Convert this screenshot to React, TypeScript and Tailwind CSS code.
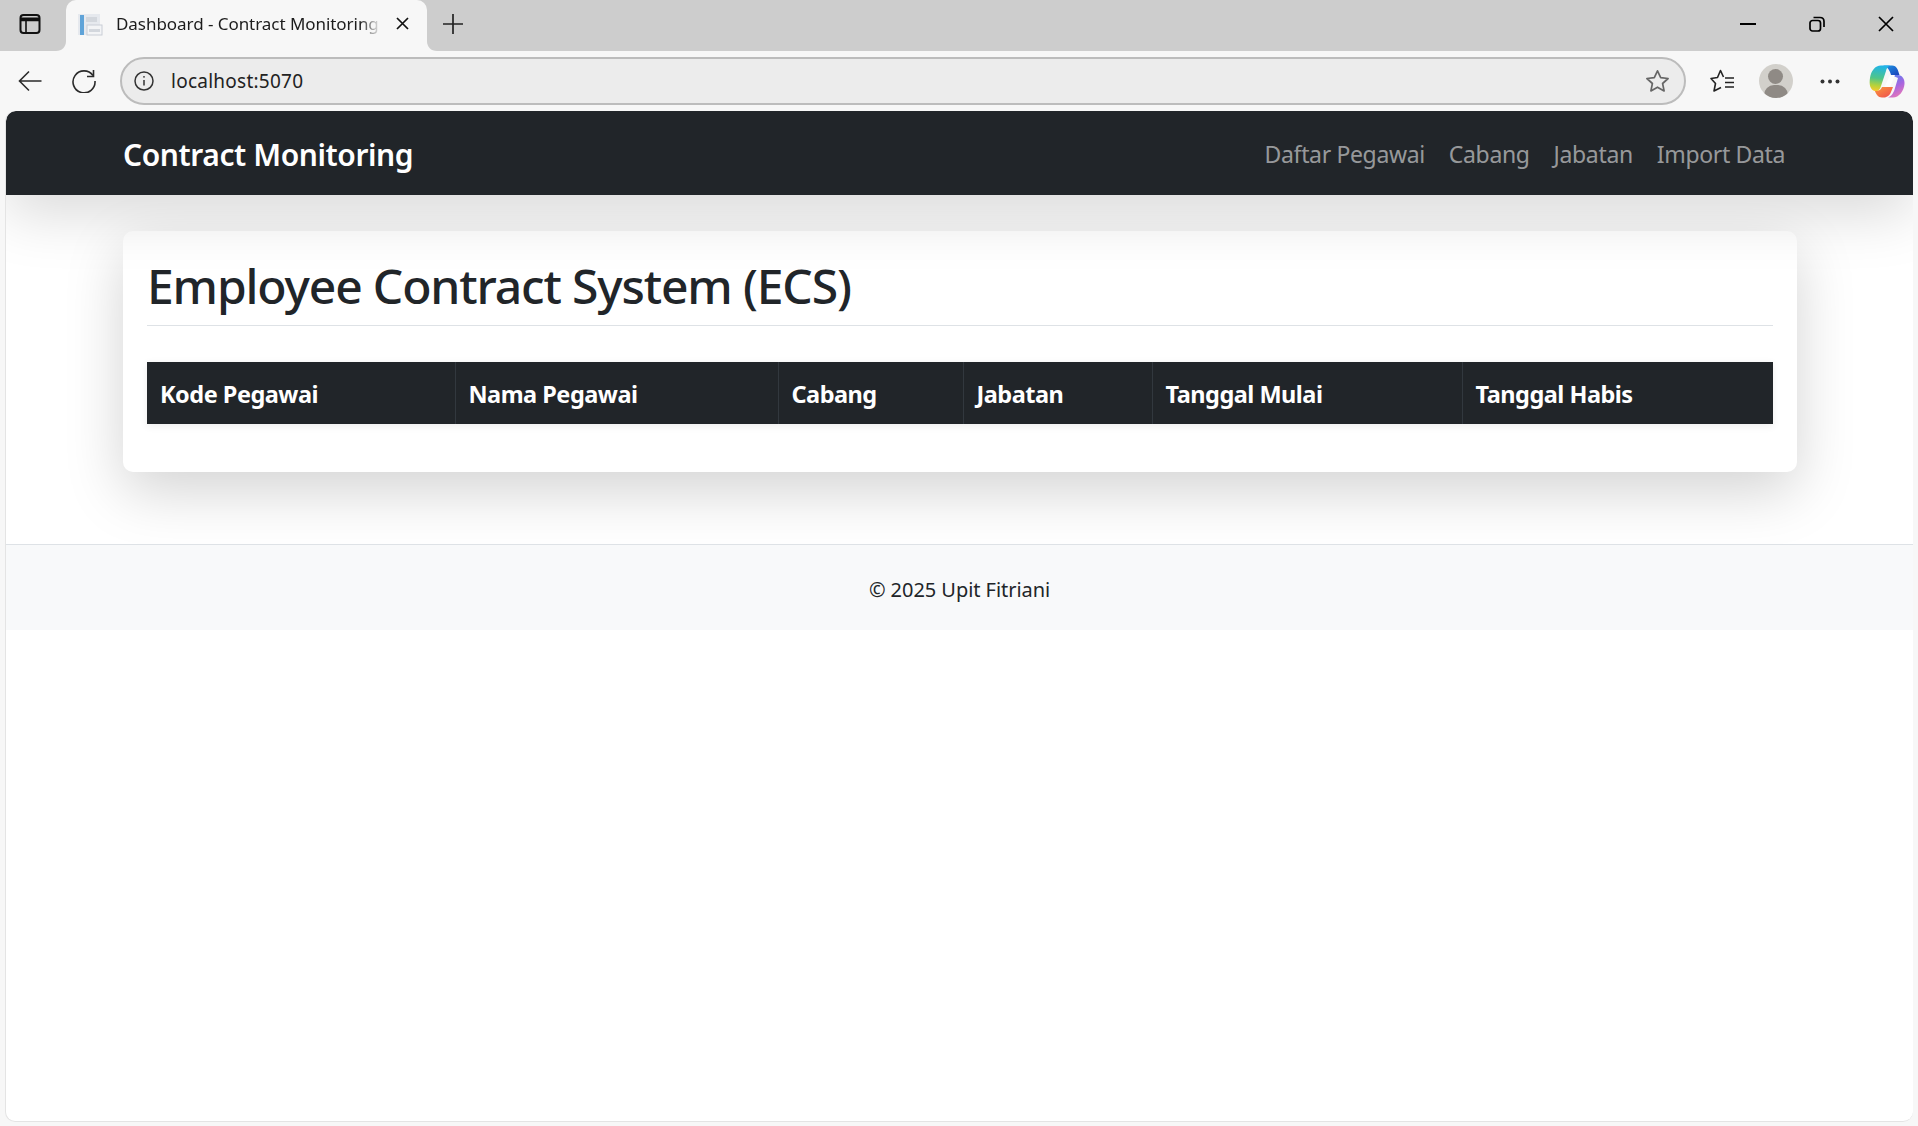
import React from 'react';

const sans = 'font-["Noto_Sans","Open_Sans",sans-serif]';

const columns = [
  { title: 'Kode Pegawai', width: 'w-[308px]' },
  { title: 'Nama Pegawai', width: 'w-[323px]' },
  { title: 'Cabang', width: 'w-[185px]' },
  { title: 'Jabatan', width: 'w-[189px]' },
  { title: 'Tanggal Mulai', width: 'w-[310px]' },
  { title: 'Tanggal Habis', width: 'w-[311px]' },
];

const navLinks = ['Daftar Pegawai', 'Cabang', 'Jabatan', 'Import Data'];

const TabFlare = ({ side }: { side: 'left' | 'right' }) => (
  <svg
    width="10"
    height="10"
    viewBox="0 0 10 10"
    className={side === 'left' ? 'absolute bottom-0 -left-[10px]' : 'absolute bottom-0 -right-[10px] -scale-x-100'}
  >
    <path d="M10 0v10H0c6 0 10-4 10-10z" fill="#f7f7f7" />
  </svg>
);

const Copilot = () => (
  <svg width="36" height="33" viewBox="8 7 36 33">
    <defs>
      <linearGradient id="cpTop" x1="0" y1="0" x2="1" y2="1">
        <stop offset="0" stopColor="#1f9be8" />
        <stop offset="1" stopColor="#1a3fb8" />
      </linearGradient>
      <linearGradient id="cpLeft" x1="0.5" y1="0" x2="0.4" y2="1">
        <stop offset="0" stopColor="#1fb4ea" />
        <stop offset="0.5" stopColor="#4fc58a" />
        <stop offset="0.8" stopColor="#b8d23a" />
        <stop offset="1" stopColor="#f5c92e" />
      </linearGradient>
      <linearGradient id="cpRight" x1="0.3" y1="0" x2="0.7" y2="1">
        <stop offset="0" stopColor="#5a7ff0" />
        <stop offset="0.5" stopColor="#a866e0" />
        <stop offset="1" stopColor="#ec7ab4" />
      </linearGradient>
      <linearGradient id="cpBottom" x1="0" y1="0" x2="1" y2="1">
        <stop offset="0" stopColor="#fb9a3c" />
        <stop offset="1" stopColor="#ee4b50" />
      </linearGradient>
    </defs>
    <path d="M13 31C17 34 20 32 21 29H32L30 34C29 37 26 39.5 23 39.5H21C17 39.5 15 36 13 31Z" fill="url(#cpBottom)" />
    <path d="M30 17H37C41 17 44 21 43.5 26C43 33 38 39.5 32 39.5H27C31 38 33 34 34 30L37 20Z" fill="url(#cpRight)" />
    <path d="M22 7.5H31C36 7.5 37 12 38.5 17H30C29 13 27 9 22 7.5Z" fill="url(#cpTop)" />
    <path d="M20 7.5C14 7.5 10 13 9 20C8 26 9 32 14 33C17 33.5 19 32 20 28L25 13C26 9 28 7.5 30 7.5Z" fill="url(#cpLeft)" />
    <path d="M29 17H34L29 29H23.5Z" fill="#fdfdfd" />
  </svg>
);

const BrowserChrome = () => (
  <header className="shrink-0">
    <div className="h-[51px] bg-[#cdcdcd] flex items-center pb-[4px]">
      <div className="w-[66px] flex justify-center pr-[6px]">
        <svg width="22" height="22" viewBox="0 0 22 22" fill="none" stroke="#111" strokeWidth="2">
          <rect x="1.5" y="2" width="19" height="18" rx="3" />
          <path d="M1.5 7.5h19M7 7.5V20" strokeWidth="1.6" />
          <path d="M2 4.5h18v3H2z" fill="#111" stroke="none" />
        </svg>
      </div>
      <div className="relative self-start h-[51px] w-[361px] bg-[#f7f7f7] rounded-t-[10px] flex items-center pl-[11px] pr-[18px] pb-[4px]">
        <TabFlare side="left" />
        <TabFlare side="right" />
        <svg width="26" height="24" viewBox="0 0 26 24" className="shrink-0">
          <rect x="1" y="2" width="22" height="21" fill="#e6e9ee" />
          <rect x="3" y="3" width="4" height="20" fill="#5fa3d8" />
          <rect x="9" y="5" width="11" height="5" fill="#d3d7dd" />
          <rect x="10" y="13" width="15" height="10" fill="#f3f4f6" stroke="#c9ced6" />
          <rect x="12" y="17" width="11" height="3" fill="#d3d7dd" />
        </svg>
        <span className={`${sans} ml-[13px] w-[265px] overflow-hidden whitespace-nowrap text-[17px] tracking-[-0.05px] text-[#1c1c1c] mask-r-from-[92%]`}>
          Dashboard - Contract Monitoring
        </span>
        <svg width="13" height="13" viewBox="0 0 13 13" className="ml-auto" stroke="#111" strokeWidth="1.7">
          <path d="M1 1l11 11M12 1L1 12" />
        </svg>
      </div>
      <svg width="22" height="22" viewBox="0 0 22 22" className="ml-[15px]" stroke="#222" strokeWidth="1.7">
        <path d="M11 1v20M1 11h20" />
      </svg>
      <div className="ml-auto flex items-center">
        <div className="w-[69px] flex justify-center">
          <svg width="16" height="2" viewBox="0 0 16 2"><path d="M0 1h16" stroke="#000" strokeWidth="2" /></svg>
        </div>
        <div className="w-[69px] flex justify-center">
          <svg width="16" height="16" viewBox="0 0 16 16" fill="none" stroke="#000" strokeWidth="1.7">
            <rect x="1" y="4.5" width="10.5" height="10.5" rx="2.5" />
            <path d="M4.5 1.5H11c2.5 0 4 1.5 4 4V11" />
          </svg>
        </div>
        <div className="w-[69px] flex justify-center -mr-[2px]">
          <svg width="16" height="16" viewBox="0 0 16 16" stroke="#000" strokeWidth="1.7"><path d="M1 1l14 14M15 1L1 15" /></svg>
        </div>
      </div>
    </div>
    <div className="h-[60px] bg-[#f7f7f7] flex items-center">
      <div className="w-[120px] flex items-center pl-[18px] gap-[30px] shrink-0">
        <svg width="24" height="22" viewBox="0 0 24 22" fill="none" stroke="#2b2b2b" strokeWidth="1.6">
          <path d="M23.5 11H1.5M11 1.5L1.5 11l9.5 9.5" />
        </svg>
        <svg width="24" height="24" viewBox="0 0 24 24" fill="none" stroke="#2b2b2b" strokeWidth="1.6">
          <path d="M21 6.5A11 11 0 1 0 23 12" />
          <path d="M21.5 1v6.5H15" />
        </svg>
      </div>
      <div className="h-[48px] flex-1 bg-[#ececec] border-2 border-[#bcbcbc] rounded-full flex items-center pl-[12px] pr-[14px] min-w-0">
        <svg width="20" height="20" viewBox="0 0 20 20" fill="none" stroke="#333" strokeWidth="1.5">
          <circle cx="10" cy="10" r="9" />
          <path d="M10 9v5.5" />
          <circle cx="10" cy="5.8" r="0.9" fill="#333" stroke="none" />
        </svg>
        <span className={`${sans} ml-[17px] text-[19px] tracking-[0.25px] text-[#222]`}>localhost:5070</span>
        <svg width="25" height="24" viewBox="0 0 25 24" fill="none" stroke="#666" strokeWidth="1.7" className="ml-auto">
          <path d="M12.5 1.8l3.2 6.8 7.4.9-5.5 5 1.5 7.4-6.6-3.7-6.6 3.7 1.5-7.4-5.5-5 7.4-.9z" strokeLinejoin="round" />
        </svg>
      </div>
      <div className="w-[232px] shrink-0 flex items-center pl-[24px]">
        <svg width="24" height="24" viewBox="0 0 24 24" fill="none" stroke="#222" strokeWidth="1.6">
          <path d="M13.5 8L10.5 1.5L7.5 8.5L1 9.5L5.5 14.5L4 22L11 18.5" strokeLinejoin="round" />
          <path d="M15 9h9M15 13.5h9M15 18h9" />
        </svg>
        <div className="ml-[25px] w-[34px] h-[34px] rounded-full bg-[#d2d0cb] overflow-hidden relative shrink-0">
          <div className="absolute left-[9px] top-[5px] w-[15px] h-[15px] rounded-full bg-[#8f8a85]" />
          <div className="absolute left-[5px] top-[21px] w-[24px] h-[20px] rounded-full bg-[#8f8a85]" />
        </div>
        <svg width="20" height="5" viewBox="0 0 20 5" fill="#333" className="ml-[27px]">
          <circle cx="2.5" cy="2.5" r="2" /><circle cx="10" cy="2.5" r="2" /><circle cx="17.5" cy="2.5" r="2" />
        </svg>
        <div className="ml-[29px] shrink-0"><Copilot /></div>
      </div>
    </div>
  </header>
);

export default function App() {
  return (
    <div className={`${sans} h-screen flex flex-col bg-[#f7f7f7] overflow-hidden`}>
      <BrowserChrome />
      <div className="flex-1 min-h-0 mx-[5px] mb-[4px] bg-white rounded-t-[10px] rounded-b-[10px] border-b border-l border-[#e4e4e4] overflow-hidden flex flex-col">
        <nav className="h-[84px] shrink-0 bg-[#212529] rounded-t-[10px] flex items-center pl-[117px] pr-[128px] pt-[2px] shadow-[0_19px_58px_rgba(0,0,0,0.15)] relative">
          <a className="text-[30px] font-semibold tracking-[-0.42px] text-white">Contract Monitoring</a>
          <div className="ml-auto flex items-center gap-[24px]">
            {navLinks.map((link) => (
              <a key={link} className="text-[23px] tracking-[-0.35px] text-[#ffffff8c]">{link}</a>
            ))}
          </div>
        </nav>
        <main className="px-[117px] pt-[36px] pb-[72px]">
          <section className="bg-white rounded-[10px] p-[24px] h-[241px] w-[1674px] shadow-[0_19px_58px_rgba(0,0,0,0.175)]">
            <h1 className="text-[48px] leading-[62px] pb-[8px] tracking-[-1.15px] font-medium text-[#212529] border-b border-[#dee2e6]">
              Employee Contract System (ECS)
            </h1>
            <table className="mt-[36px] w-[1626px] table-fixed border-collapse shadow-[0_2px_8px_rgba(0,0,0,0.075)]">
              <thead>
                <tr className="h-[62px] bg-[#212529]">
                  {columns.map((col) => (
                    <th key={col.title} className={`${col.width} border-r border-[#32383e] last:border-r-0 pl-[13px] pt-[4px] text-left text-[23.5px] font-bold tracking-[-0.5px] text-white`}>
                      {col.title}
                    </th>
                  ))}
                </tr>
              </thead>
            </table>
          </section>
        </main>
        <footer className="h-[86px] shrink-0 bg-[#f8f9fa] border-t border-[#dee2e6] flex items-center justify-center pt-[4px] text-[20px] tracking-[-0.05px] text-[#212529]">
          © 2025 Upit Fitriani
        </footer>
      </div>
    </div>
  );
}
